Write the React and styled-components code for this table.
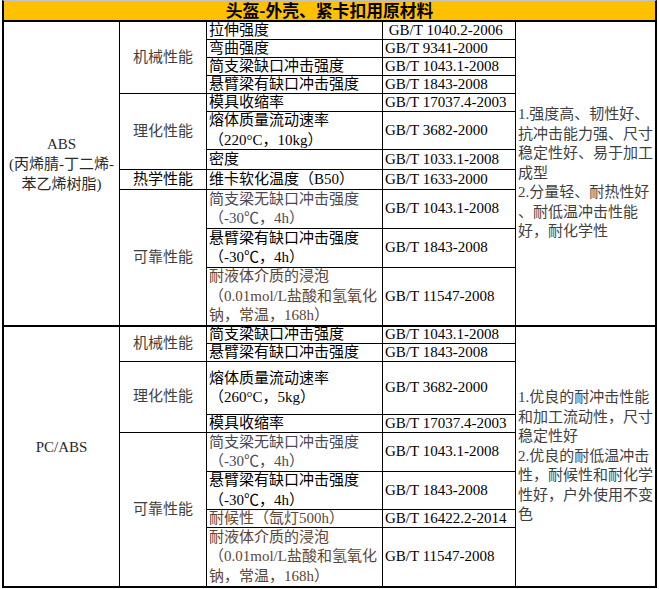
import React from 'react';
import styled, { createGlobalStyle } from 'styled-components';

const materials = [
  {
    name: ['ABS', '(丙烯腈-丁二烯-', '苯乙烯树脂)'],
    rows: [17, 17, 17, 17, 17, 37, 19, 19, 38, 38, 57],
    groups: [
      { label: '机械性能', span: 4 },
      { label: '理化性能', span: 3 },
      { label: '热学性能', span: 1, ink: true },
      { label: '可靠性能', span: 3 },
    ],
    items: [
      { lines: ['拉伸强度'], std: ' GB/T 1040.2-2006' },
      { lines: ['弯曲强度'], std: 'GB/T 9341-2000' },
      { lines: ['简支梁缺口冲击强度'], std: 'GB/T 1043.1-2008' },
      { lines: ['悬臂梁有缺口冲击强度'], std: 'GB/T 1843-2008' },
      { lines: ['模具收缩率'], std: 'GB/T 17037.4-2003' },
      { lines: ['熔体质量流动速率', '（220°C，10kg）'], std: 'GB/T 3682-2000' },
      { lines: ['密度'], std: 'GB/T 1033.1-2008' },
      { lines: ['维卡软化温度（B50）'], std: 'GB/T 1633-2000' },
      { lines: ['简支梁无缺口冲击强度', '（-30℃，4h）'], std: 'GB/T 1043.1-2008', tone: 'slate' },
      { lines: ['悬臂梁有缺口冲击强度', '（-30℃，4h）'], std: 'GB/T 1843-2008' },
      { lines: ['耐液体介质的浸泡', '（0.01mol/L盐酸和氢氧化', '钠，常温，168h）'], std: 'GB/T 11547-2008', tone: 'brown' },
    ],
    note: [
      '1.强度高、韧性好、',
      '抗冲击能力强、尺寸',
      '稳定性好、易于加工',
      '成型',
      '2.分量轻、耐热性好',
      '、耐低温冲击性能',
      '好，耐化学性',
    ],
  },
  {
    name: ['PC/ABS'],
    rows: [16, 17, 52, 17, 38, 37, 17, 58],
    groups: [
      { label: '机械性能', span: 2 },
      { label: '理化性能', span: 2 },
      { label: '可靠性能', span: 4 },
    ],
    items: [
      { lines: ['简支梁缺口冲击强度'], std: 'GB/T 1043.1-2008' },
      { lines: ['悬臂梁有缺口冲击强度'], std: 'GB/T 1843-2008' },
      { lines: ['熔体质量流动速率', '（260°C，5kg）'], std: 'GB/T 3682-2000' },
      { lines: ['模具收缩率'], std: 'GB/T 17037.4-2003' },
      { lines: ['简支梁无缺口冲击强度', '（-30℃，4h）'], std: 'GB/T 1043.1-2008', tone: 'slate' },
      { lines: ['悬臂梁有缺口冲击强度', '（-30℃，4h）'], std: 'GB/T 1843-2008' },
      { lines: ['耐候性（氙灯500h）'], std: 'GB/T 16422.2-2014', tone: 'brown' },
      { lines: ['耐液体介质的浸泡', '（0.01mol/L盐酸和氢氧化', '钠，常温，168h）'], std: 'GB/T 11547-2008', tone: 'brown' },
    ],
    note: [
      '1.优良的耐冲击性能',
      '和加工流动性，尺寸',
      '稳定性好',
      '2.优良的耐低温冲击',
      '性，耐候性和耐化学',
      '性好，户外使用不变',
      '色',
    ],
  },
];

const tones = {
  ink: '#000000',
  gray: '#3f3f3f',
  slate: '#4a4a55',
  brown: '#5e4634',
};

function Lines({ lines }) {
  return lines.map((line, i) => <Line key={i}>{line}</Line>);
}

function MaterialSection({ material }) {
  let start = 1;
  const groups = material.groups.map((g) => {
    const cell = (
      <CategoryCell key={g.label + start} $start={start} $span={g.span} $tone={g.ink ? 'ink' : 'gray'}>
        {g.label}
      </CategoryCell>
    );
    start += g.span;
    return cell;
  });

  return (
    <Section $rows={material.rows}>
      <NameCell>
        <Lines lines={material.name} />
      </NameCell>
      {groups}
      {material.items.map((item, i) => (
        <React.Fragment key={i}>
          <ItemCell $row={i + 1} $tone={item.tone || 'ink'}>
            <Lines lines={item.lines} />
          </ItemCell>
          <StandardCell $row={i + 1}>{item.std}</StandardCell>
        </React.Fragment>
      ))}
      <NoteCell>
        <Lines lines={material.note} />
      </NoteCell>
    </Section>
  );
}

export default function App() {
  return (
    <>
      <GlobalStyle />
      <Sheet>
        <Header>
          <Title>头盔-外壳、紧卡扣用原材料</Title>
        </Header>
        {materials.map((m) => (
          <MaterialSection key={m.name[0]} material={m} />
        ))}
      </Sheet>
    </>
  );
}

const GlobalStyle = createGlobalStyle`
  body {
    margin: 0;
    background: #ffffff;
    font-family: "Liberation Serif", "Noto Sans CJK SC", serif;
    font-size: 15px;
    color: #000;
  }
`;

const Sheet = styled.div`
  display: flex;
  flex-direction: column;
  gap: 2px;
  width: 651px;
  margin-left: 2px;
  background: #000;
  border-top: 1px solid #c4c4c4;
  border-left: 2px solid #000;
  border-right: 2px solid #000;
  border-bottom: 2px solid #000;
`;

const Header = styled.div`
  height: 19px;
  display: flex;
  align-items: center;
  justify-content: center;
  background: #ffc000;
`;

const Title = styled.h1`
  margin: 0;
  font-family: "Noto Sans CJK SC", sans-serif;
  font-weight: 700;
  font-size: 16.8px;
  line-height: 19px;
  height: 19px;
`;

const Section = styled.div`
  display: grid;
  grid-template-columns: 115px 86px 175px 132px 139px;
  grid-template-rows: ${(p) => p.$rows.map((h) => `${h}px`).join(' ')};
  gap: 1px;
  background: #000;
`;

const Cell = styled.div`
  display: flex;
  flex-direction: column;
  justify-content: center;
  background: #fff;
  line-height: 19.5px;
  white-space: pre;
  overflow: hidden;
`;

const Line = styled.span`
  display: block;
`;

const NameCell = styled(Cell)`
  grid-column: 1;
  grid-row: 1 / -1;
  align-items: center;
  padding-bottom: 20px;
  line-height: 20px;
  color: #2a2a2a;
`;

const CategoryCell = styled(Cell)`
  grid-column: 2;
  grid-row: ${(p) => p.$start} / span ${(p) => p.$span};
  align-items: center;
  color: ${(p) => tones[p.$tone]};
`;

const ItemCell = styled(Cell)`
  grid-column: 3;
  grid-row: ${(p) => p.$row};
  padding-left: 2px;
  color: ${(p) => tones[p.$tone]};
`;

const StandardCell = styled(Cell)`
  grid-column: 4;
  grid-row: ${(p) => p.$row};
  padding-left: 2px;
`;

const NoteCell = styled(Cell)`
  grid-column: 5;
  grid-row: 1 / -1;
  padding-left: 2px;
  color: ${tones.gray};
`;
